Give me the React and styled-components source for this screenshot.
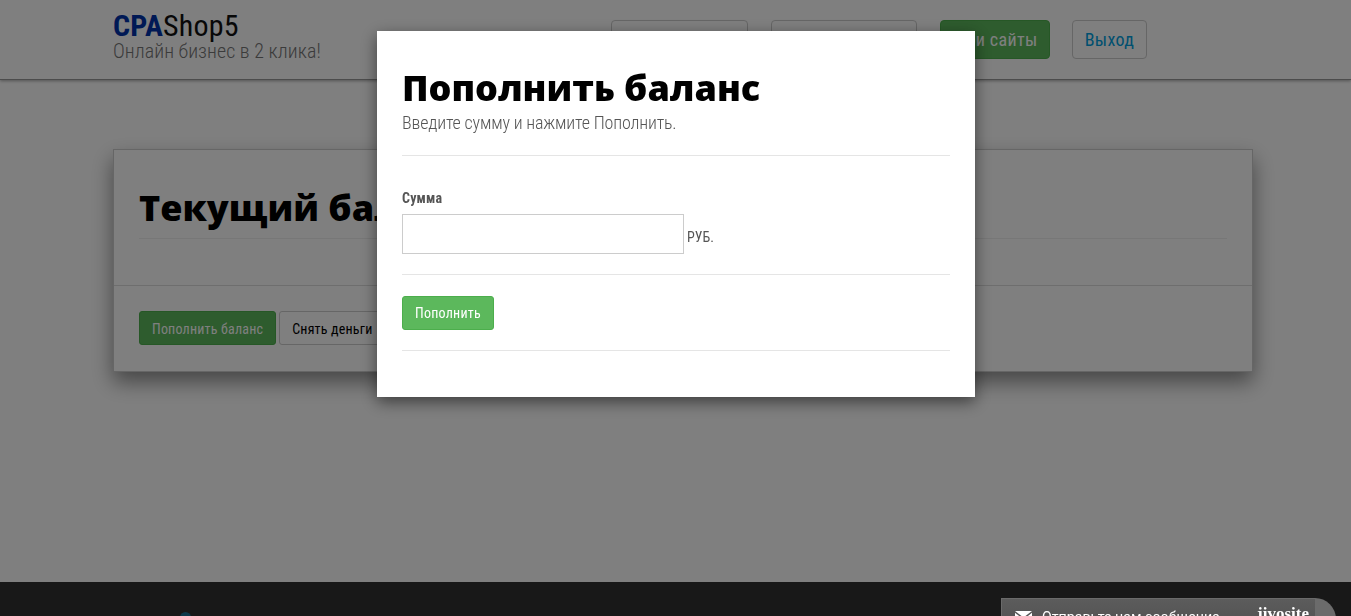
import styled, { createGlobalStyle } from "styled-components";

const GlobalStyle = createGlobalStyle`
  html, body {
    margin: 0;
    padding: 0;
    height: 100%;
    overflow: hidden;
    background: #fff;
  }
  * {
    box-sizing: border-box;
  }
`;

const condensed = `"Roboto Condensed", Roboto, "Liberation Sans", sans-serif`;

const App = () => {
  return (
    <Page>
      <GlobalStyle />
      <Header>
        <Brand>
          <BrandName>
            <b>CPA</b>Shop5
          </BrandName>
          <BrandTagline>Онлайн бизнес в 2 клика!</BrandTagline>
        </Brand>
        <Nav>
          <NavButton $width={137}>Мой профиль</NavButton>
          <NavButton $width={146}>Мой баланс</NavButton>
          <NavButton $width={110} $green $tight>
            Мои сайты
          </NavButton>
          <NavButton $width={75} $link>
            Выход
          </NavButton>
        </Nav>
      </Header>

      <Main>
        <Card>
          <CardBody>
            <CardTitle>Текущий баланс</CardTitle>
            <Rule />
          </CardBody>
          <CardFooter>
            <SmallButton $green>Пополнить баланс</SmallButton>
            <SmallButton>Снять деньги</SmallButton>
          </CardFooter>
        </Card>
      </Main>

      <Footer>
        <FooterLogo />
      </Footer>

      <Overlay />

      <Modal>
        <ModalTitle>Пополнить баланс</ModalTitle>
        <ModalLead>Введите сумму и нажмите Пополнить.</ModalLead>
        <ModalRule $top={20} />
        <FieldLabel htmlFor="sum">Сумма</FieldLabel>
        <FieldRow>
          <SumInput id="sum" type="text" />
          <Unit>РУБ.</Unit>
        </FieldRow>
        <ModalRule $top={20} />
        <SubmitButton>Пополнить</SubmitButton>
        <ModalRule $top={20} />
      </Modal>

      <ChatWidget>
        <ChatBar>
          <svg width="17" height="12" viewBox="0 0 17 12" fill="#fff">
            <path d="M0 0h17L8.5 6.6z" />
            <path d="M0 1.8v10.2h17V1.8L8.5 8.4z" />
          </svg>
          <ChatText>Отправьте нам сообщение</ChatText>
          <ChatBrand>jivosite</ChatBrand>
        </ChatBar>
        <ChatEar />
      </ChatWidget>
    </Page>
  );
};

const Page = styled.div`
  display: flex;
  flex-direction: column;
  height: 616px;
  overflow: hidden;
  font-family: ${condensed};
  font-stretch: condensed;
`;

const Header = styled.header`
  display: flex;
  justify-content: space-between;
  align-items: flex-start;
  height: 80px;
  padding: 0 204px 0 113px;
  background: #fff;
  border-bottom: 1px solid #999;
  box-shadow: 0 1px 3px rgba(0, 0, 0, 0.35);
`;

const Brand = styled.div`
  padding-top: 11px;
`;

const BrandName = styled.div`
  font-size: 30px;
  line-height: 30px;
  letter-spacing: 0.2px;
  color: #111;
  b {
    color: #0033aa;
    font-weight: 700;
  }
`;

const BrandTagline = styled.div`
  font-size: 20px;
  line-height: 21px;
  font-weight: 300;
  letter-spacing: 0.05px;
  color: #777;
`;

const Nav = styled.nav`
  display: flex;
  gap: 23px;
  padding-top: 20px;
`;

const NavButton = styled.button`
  width: ${(p) => p.$width}px;
  height: 39px;
  margin-right: ${(p) => (p.$tight ? "-1px" : "0")};
  padding: 0;
  border-radius: 4px;
  border: 1px solid ${(p) => (p.$green ? "#4cae4c" : "#ccc")};
  background: ${(p) => (p.$green ? "#5cb85c" : "#fff")};
  color: ${(p) => (p.$green ? "#fff" : p.$link ? "#00a0e0" : "#333")};
  font-family: inherit;
  font-stretch: condensed;
  font-size: 18px;
  letter-spacing: 0.35px;
`;

const Main = styled.main`
  flex: 1;
  padding: 69px 0 0 113px;
`;

const Card = styled.section`
  width: 1140px;
  height: 223px;
  border: 1px solid #ccc;
  background: #fff;
  box-shadow: 0 10px 20px rgba(0, 0, 0, 0.45);
`;

const CardBody = styled.div`
  height: 136px;
  padding: 25px 25px 0;
  border-bottom: 1px solid #ddd;
`;

const CardTitle = styled.h1`
  margin: 0;
  height: 63px;
  font-family: "Open Sans", sans-serif;
  font-size: 36px;
  line-height: 66px;
  font-weight: 800;
  font-stretch: normal;
  color: #000;
`;

const Rule = styled.hr`
  margin: 0;
  border: 0;
  border-top: 1px solid #eee;
`;

const CardFooter = styled.div`
  display: flex;
  gap: 3px;
  padding: 25px 25px 0;
`;

const SmallButton = styled.button`
  height: 34px;
  padding: 1px 12px 0;
  border-radius: 3px;
  border: 1px solid ${(p) => (p.$green ? "#4cae4c" : "#ccc")};
  background: ${(p) => (p.$green ? "#5cb85c" : "#fff")};
  color: ${(p) => (p.$green ? "#fff" : "#000")};
  font-family: inherit;
  font-stretch: condensed;
  font-size: 14px;
  letter-spacing: 0.2px;
`;

const Footer = styled.footer`
  height: 34px;
  padding: 30px 0 0 180px;
  background: #303030;
`;

const FooterLogo = styled.div`
  width: 11px;
  height: 11px;
  border-radius: 50%;
  background: #1a7396;
`;

const Overlay = styled.div`
  position: fixed;
  inset: 0;
  background: rgba(0, 0, 0, 0.5);
`;

const Modal = styled.div`
  position: fixed;
  top: 31px;
  left: 377px;
  width: 598px;
  height: 366px;
  padding: 35px 25px 0;
  background: #fff;
  box-shadow: 0 5px 15px rgba(0, 0, 0, 0.5);
`;

const ModalTitle = styled.h2`
  margin: 0;
  font-family: "Open Sans", sans-serif;
  font-size: 36px;
  line-height: 44px;
  font-weight: 800;
  font-stretch: normal;
  letter-spacing: -0.05px;
  color: #000;
`;

const ModalLead = styled.p`
  margin: 0;
  font-size: 18px;
  line-height: 25px;
  font-weight: 300;
  letter-spacing: -0.17px;
  color: #555;
`;

const ModalRule = styled.hr`
  margin: ${(p) => p.$top}px 0 0;
  border: 0;
  border-top: 1px solid #e5e5e5;
`;

const FieldLabel = styled.label`
  display: block;
  margin-top: 32px;
  font-size: 14px;
  line-height: 20px;
  font-weight: 700;
  letter-spacing: 0.2px;
  color: #555;
`;

const FieldRow = styled.div`
  display: flex;
  align-items: flex-end;
  gap: 3px;
  margin-top: 6px;
`;

const SumInput = styled.input`
  width: 282px;
  height: 40px;
  border: 1px solid #ccc;
  background: #fff;
  outline: none;
`;

const Unit = styled.span`
  padding-bottom: 8px;
  font-size: 14px;
  line-height: 18px;
  color: #555;
`;

const SubmitButton = styled.button`
  display: block;
  width: 92px;
  height: 34px;
  margin-top: 21px;
  padding: 0;
  border-radius: 3px;
  border: 1px solid #4cae4c;
  background: #5cb85c;
  color: #fff;
  font-family: inherit;
  font-stretch: condensed;
  font-size: 14px;
  letter-spacing: 0.25px;
`;

const ChatWidget = styled.div`
  position: fixed;
  top: 598px;
  left: 1001px;
  display: flex;
  height: 40px;
`;

const ChatBar = styled.div`
  display: flex;
  align-items: flex-start;
  width: 314px;
  padding: 9px 6px 0 13px;
  background: linear-gradient(#5c5c5c, #4d4d4d);
  border-top: 1px solid #6a6a6a;
  border-left: 1px solid #6a6a6a;
  color: #fff;
  svg {
    margin-top: 3px;
    flex: none;
  }
`;

const ChatText = styled.span`
  margin-left: 10px;
  font-family: Roboto, sans-serif;
  font-stretch: normal;
  font-size: 14.2px;
  line-height: 18px;
  white-space: nowrap;
`;

const ChatBrand = styled.span`
  margin-left: auto;
  margin-top: -3px;
  font-family: "Liberation Serif", serif;
  font-stretch: normal;
  font-size: 17px;
  line-height: 18px;
  font-weight: 700;
`;

const ChatEar = styled.div`
  width: 21px;
  height: 40px;
  background: #6b6b6b;
  border-top-right-radius: 21px;
`;

export default App;
